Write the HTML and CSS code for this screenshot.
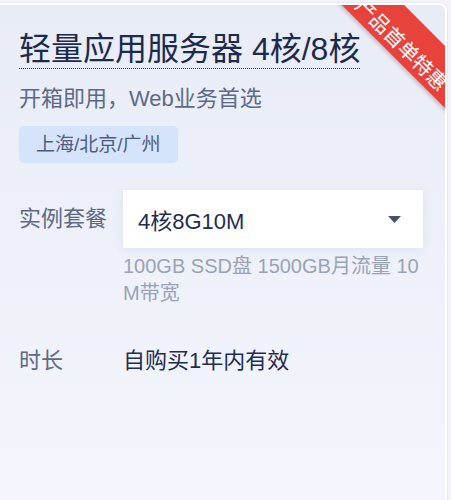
FILE: index.html
```html
<!DOCTYPE html>
<html lang="zh-CN">
<head>
<meta charset="utf-8">
<title>轻量应用服务器</title>
<link rel="stylesheet" href="styles.css">
</head>
<body>
<div class="card">
  <div class="ribbon">产品首单特惠</div>
  <h1 class="title">轻量应用服务器 4核/8核</h1>
  <p class="subtitle">开箱即用，Web业务首选</p>
  <div class="tags"><span class="tag">上海/北京/广州</span></div>
  <div class="row row-plan">
    <div class="label">实例套餐</div>
    <div class="select">
      <span class="select-value">4核8G10M</span>
      <svg class="caret" width="13" height="7" viewBox="0 0 13 7"><path d="M0 0H13L6.5 7Z" fill="#4a5068"/></svg>
    </div>
    <div class="desc">100GB SSD盘 1500GB月流量 10M带宽</div>
  </div>
  <div class="row row-time">
    <div class="label">时长</div>
    <div class="value">自购买1年内有效</div>
  </div>
</div>
</body>
</html>
```
FILE: styles.css
```css
html, body {
  margin: 0;
  padding: 0;
}
body {
  background: #f2f4f9;
  font-family: "Liberation Sans", "Noto Sans CJK SC", sans-serif;
  width: 451px;
  height: 500px;
  overflow: hidden;
}
.card {
  box-sizing: border-box;
  position: relative;
  overflow: hidden;
  margin: 3px 0 0 -10px;
  width: 457px;
  min-height: 520px;
  border: 2px solid #ffffff;
  border-radius: 8px;
  background: linear-gradient(180deg, #e8ecf6 0%, #eef1f9 50%, #f3f6fc 100%);
  padding: 25px 0 0 27px;
  box-shadow: 0 0 0 1px #e6e9f0;
}
.ribbon {
  box-sizing: border-box;
  position: absolute;
  left: 305px;
  top: 12px;
  width: 220px;
  height: 44px;
  padding-top: 16px;
  line-height: 28px;
  text-align: center;
  background: #e8423d;
  color: #ffffff;
  font-size: 20px;
  transform: rotate(45deg);
  box-shadow: 0 2px 4px rgba(120, 20, 20, 0.25);
}
.title {
  display: inline-block;
  margin: 0;
  font-size: 32px;
  font-weight: normal;
  line-height: 38px;
  color: #1c2a4e;
  border-bottom: 1px dotted #1c2a4e;
}
.subtitle {
  margin: 15px 0 0;
  font-size: 22px;
  line-height: 30px;
  color: #5c6a86;
}
.tags {
  display: flex;
  margin-top: 12px;
}
.tag {
  height: 37px;
  line-height: 37px;
  padding: 0 17px;
  font-size: 19px;
  color: #4d5d7d;
  background: #d5e3fb;
  border-radius: 5px;
}
.row {
  display: grid;
  grid-template-columns: 104px 300px;
  align-items: center;
}
.row-plan {
  margin-top: 27px;
}
.row-time {
  margin-top: 39px;
}
.label {
  font-size: 22px;
  line-height: 30px;
  color: #5c6a86;
}
.select {
  box-sizing: border-box;
  height: 58px;
  display: flex;
  align-items: center;
  justify-content: space-between;
  padding: 0 22px 0 15px;
  background: #ffffff;
  box-shadow: 0 2px 10px rgba(40, 60, 110, 0.08);
}
.select-value {
  font-size: 22px;
  color: #1f2d50;
}
.caret {
  display: block;
}
.desc {
  grid-column: 2;
  margin-top: 5px;
  font-size: 20px;
  line-height: 27px;
  color: #9aa3b6;
  word-break: break-all;
}
.value {
  font-size: 22px;
  line-height: 30px;
  color: #1f2d50;
}
```
